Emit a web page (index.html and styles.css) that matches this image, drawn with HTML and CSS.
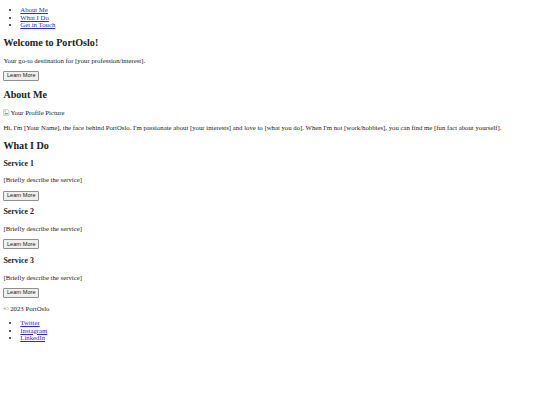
FILE: index.html
```html
<!DOCTYPE html>
<html lang="en">
<head>
  <meta charset="UTF-8">
  <meta name="viewport" content="width=device-width, initial-scale=1.0">
  <title>PortOslo</title>
  <link rel="stylesheet" href="styles.css">
</head>
<body>
  <header>
    <nav>
      <ul class="links top-links">
        <li><a href="#about">About Me</a></li>
        <li><a href="#services">What I Do</a></li>
        <li><a href="#contact">Get in Touch</a></li>
      </ul>
    </nav>
  </header>

  <section class="hero">
    <h1>Welcome to PortOslo!</h1>
    <p>Your go-to destination for [your profession/interest].</p>
    <button class="btn">Learn More</button>
  </section>

  <section id="about">
    <h2>About Me</h2>
    <span class="profile-pic"><svg class="broken" viewBox="0 0 16 16" width="7" height="7"><path d="M1.5 1.5h9l3 3v10h-12z" fill="#fff" stroke="#8a8a8a"/><path d="M3 12l3-4 2 2.5 2-1.5 2 3z" fill="#5a9e4b"/><circle cx="5" cy="5" r="1.3" fill="#4a8fd1"/></svg>Your Profile Picture</span>
    <p>Hi, I'm [Your Name], the face behind PortOslo. I'm passionate about [your interests] and love to [what you do]. When I'm not [work/hobbies], you can find me [fun fact about yourself].</p>
  </section>

  <section id="services">
    <h2>What I Do</h2>
    <div class="service">
      <h3>Service 1</h3>
      <p>[Briefly describe the service]</p>
      <button class="btn">Learn More</button>
    </div>
    <div class="service">
      <h3>Service 2</h3>
      <p>[Briefly describe the service]</p>
      <button class="btn">Learn More</button>
    </div>
    <div class="service">
      <h3>Service 3</h3>
      <p>[Briefly describe the service]</p>
      <button class="btn">Learn More</button>
    </div>
  </section>

  <footer id="contact">
    <p>&copy; 2023 PortOslo</p>
    <ul class="links">
      <li><a href="#">Twitter</a></li>
      <li><a href="#">Instagram</a></li>
      <li><a href="#">LinkedIn</a></li>
    </ul>
  </footer>
</body>
</html>
```

FILE: styles.css
```css
body {
  margin: 0;
  padding: 0 3.4px 3.4px;
  font-family: "Liberation Serif", serif;
  font-size: 6.75px;
  line-height: 7.5px;
  color: #222;
  background: #fff;
}
a {
  color: #2a2ad8;
}
.links {
  margin: 6.75px 0;
  padding-left: 16.9px;
}
.top-links {
  margin-top: 6.4px;
}
h1,
h2 {
  font-size: 10.125px;
  line-height: 11.1px;
  margin: 8.4px 0;
}
h3 {
  font-size: 7.9px;
  line-height: 8.7px;
  margin: 7.9px 0;
}
p {
  margin: 6.75px 0;
}
.btn {
  font-family: "Liberation Sans", sans-serif;
  font-size: 5.625px;
  line-height: 7.2px;
  padding: 0.4px 2.5px;
  border: 0.85px solid #8f8f8f;
  border-radius: 1px;
  background: #efefef;
  color: #222;
}
.profile-pic {
  display: inline-flex;
  align-items: center;
}
```
